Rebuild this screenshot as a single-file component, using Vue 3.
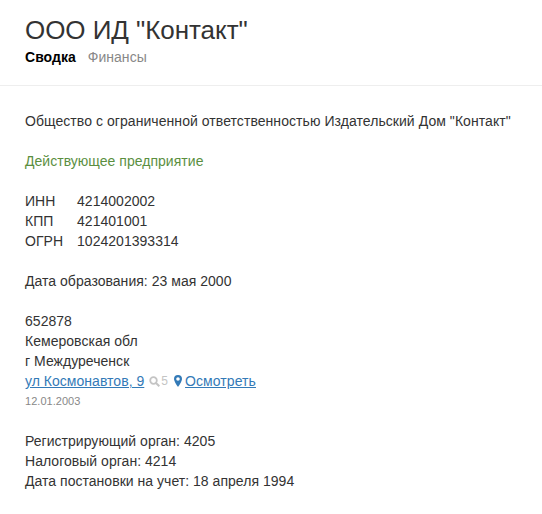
<script setup>
const codes = [
  { label: 'ИНН', value: '4214002002' },
  { label: 'КПП', value: '421401001' },
  { label: 'ОГРН', value: '1024201393314' },
]
</script>

<template>
  <div class="page">
    <header class="head">
      <h1 class="title">ООО ИД "Контакт"</h1>
      <nav class="tabs">
        <span class="tab active">Сводка</span>
        <span class="tab">Финансы</span>
      </nav>
    </header>
    <main class="body">
      <p class="full">Общество с ограниченной ответственностью Издательский Дом "Контакт"</p>
      <p class="status">Действующее предприятие</p>
      <div class="block">
        <div v-for="c in codes" :key="c.label" class="code">
          <span class="code-label">{{ c.label }}</span><span>{{ c.value }}</span>
        </div>
      </div>
      <p>Дата образования: 23 мая 2000</p>
      <div class="block">
        <div>652878</div>
        <div>Кемеровская обл</div>
        <div>г Междуреченск</div>
        <div class="addr">
          <a class="link">ул Космонавтов, 9</a>
          <span class="count">
            <svg class="search" width="11" height="11" viewBox="0 0 11 11">
              <circle cx="4.500" cy="4.500" r="3.300" fill="none" stroke="#c4c4c4" stroke-width="1.800" />
              <path d="M7 7l3.300 3.300" stroke="#c4c4c4" stroke-width="2" />
            </svg>5
          </span>
          <svg class="pin" width="8" height="12" viewBox="0 0 8 12">
            <path fill="#337ab7" fill-rule="evenodd" d="M4 0a4 4 0 0 0-4 4c0 2.600 4 8 4 8s4-5.400 4-8a4 4 0 0 0-4-4zm0 2.200a1.800 1.800 0 1 1 0 3.600 1.800 1.800 0 0 1 0-3.600z" />
          </svg>
          <a class="link view">Осмотреть</a>
        </div>
        <div class="date">12.01.2003</div>
      </div>
      <div class="block">
        <div>Регистрирующий орган: 4205</div>
        <div>Налоговый орган: 4214</div>
        <div>Дата постановки на учет: 18 апреля 1994</div>
      </div>
    </main>
  </div>
</template>

<style>
html, body { margin: 0; background: #fff; }
</style>

<style scoped>
.page {
  width: 542px;
  height: 514px;
  overflow: hidden;
  font-family: "Liberation Sans", Arial, sans-serif;
  font-size: 14px;
  line-height: 20px;
  letter-spacing: 0.03px;
  color: #333;
}
.head {
  padding: 14px 25px 18px;
  border-bottom: 1px solid #eee;
}
.title {
  margin: 0;
  font-size: 26px;
  line-height: 32px;
  font-weight: 400;
  letter-spacing: -0.05px;
}
.tabs {
  display: flex;
  gap: 12px;
  margin-top: 1px;
}
.tab { color: #888; }
.tab.active { color: #000; font-weight: 700; }
.body { padding: 25px 25px 0; }
p { margin: 0 0 20px; }
.full { letter-spacing: 0.06px; }
.status { color: #5b8f3f; }
.block { margin-bottom: 20px; }
.code { display: flex; }
.code-label { width: 52px; }
.addr { display: flex; align-items: center; }
.link { color: #337ab7; text-decoration: underline; }
.view { letter-spacing: 0.08px; }
.count {
  display: inline-flex;
  align-items: center;
  margin-left: 5px;
  color: #c4c4c4;
  font-size: 12px;
}
.search { margin-right: 1px; }
.pin { margin-left: 6px; margin-right: 3px; }
.date { font-size: 11px; color: #888; }
</style>
